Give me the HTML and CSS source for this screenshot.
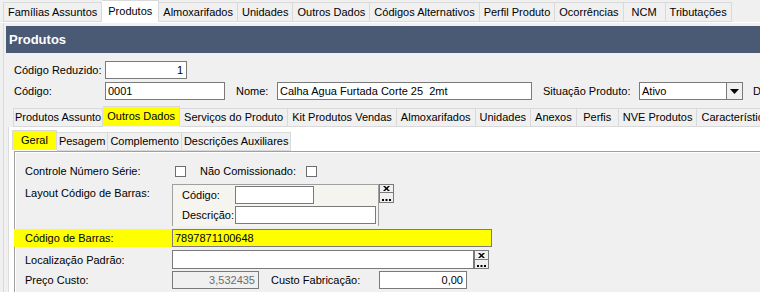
FILE: index.html
```html
<!DOCTYPE html>
<html lang="pt">
<head>
  <meta charset="UTF-8" />
  <title>Produtos</title>
  <link rel="stylesheet" href="styles.css">
</head>
<body>

<div class="tabs top-tabs">
  <div class="tab">Famílias Assuntos</div>
  <div class="tab active">Produtos</div>
  <div class="tab">Almoxarifados</div>
  <div class="tab">Unidades</div>
  <div class="tab">Outros Dados</div>
  <div class="tab">Códigos Alternativos</div>
  <div class="tab">Perfil Produto</div>
  <div class="tab">Ocorrências</div>
  <div class="tab">NCM</div>
  <div class="tab">Tributações</div>
</div>

<div class="frame">
  <div class="header">Produtos</div>

  <div class="row first">
    <label class="lbl-main">Código Reduzido:</label>
    <div class="input num w-reduz">1</div>
  </div>
  <div class="row">
    <label class="lbl-main">Código:</label>
    <div class="input w-cod">0001</div>
    <label class="lbl-nome">Nome:</label>
    <div class="input w-nome">Calha Agua Furtada Corte 25&nbsp; 2mt</div>
    <label class="lbl-sit">Situação Produto:</label>
    <div class="input select w-sit">
      <span class="select-text">Ativo</span>
      <span class="select-btn">
        <svg width="9" height="5" viewBox="0 0 9 5"><path d="M0 0h9L4.5 5z" fill="#000"/></svg>
      </span>
    </div>
    <label class="lbl-data">Data Cadastro:</label>
  </div>

  <div class="tabs sub-tabs">
    <div class="tab">Produtos Assunto</div>
    <div class="tab active yellow">Outros Dados</div>
    <div class="tab">Serviços do Produto</div>
    <div class="tab">Kit Produtos Vendas</div>
    <div class="tab">Almoxarifados</div>
    <div class="tab">Unidades</div>
    <div class="tab">Anexos</div>
    <div class="tab">Perfis</div>
    <div class="tab">NVE Produtos</div>
    <div class="tab">Características</div>
  </div>

  <div class="sheet">
    <div class="tabs inner-tabs">
      <div class="tab active yellow">Geral</div>
      <div class="tab">Pesagem</div>
      <div class="tab">Complemento</div>
      <div class="tab">Descrições Auxiliares</div>
    </div>

    <div class="group">
      <div class="grow check-row">
        <label class="lbl-g">Controle Número Série:</label>
        <span class="check"></span>
        <label class="lbl-com">Não Comissionado:</label>
        <span class="check"></span>
      </div>

      <div class="grow layout-row">
        <label class="lbl-g">Layout Código de Barras:</label>
        <div class="layout-box">
          <div class="lrow">
            <label class="lbl-l">Código:</label>
            <div class="input w-lcod"></div>
          </div>
          <div class="lrow">
            <label class="lbl-l">Descrição:</label>
            <div class="input w-ldesc"></div>
          </div>
        </div>
        <div class="btns">
          <span class="mini x">
            <svg width="7" height="5" viewBox="0 0 7 5"><path d="M0 0h2l1.5 1.5L5 0h2L4.5 2.5 7 5H5L3.5 3.5 2 5H0l2.5-2.5z" fill="#000"/></svg>
          </span>
          <span class="mini dots">
            <svg width="9" height="2" viewBox="0 0 9 2"><path d="M0 0h2v2H0zM3.5 0h2v2h-2zM7 0h2v2H7z" fill="#000"/></svg>
          </span>
        </div>
      </div>

      <div class="grow barras">
        <label class="lbl-g">Código de Barras:</label>
        <div class="input w-barras">7897871100648</div>
      </div>

      <div class="grow local-row">
        <label class="lbl-g">Localização Padrão:</label>
        <div class="input w-local"></div>
        <div class="btns">
          <span class="mini x">
            <svg width="7" height="5" viewBox="0 0 7 5"><path d="M0 0h2l1.5 1.5L5 0h2L4.5 2.5 7 5H5L3.5 3.5 2 5H0l2.5-2.5z" fill="#000"/></svg>
          </span>
          <span class="mini dots">
            <svg width="9" height="2" viewBox="0 0 9 2"><path d="M0 0h2v2H0zM3.5 0h2v2h-2zM7 0h2v2H7z" fill="#000"/></svg>
          </span>
        </div>
      </div>

      <div class="grow">
        <label class="lbl-g">Preço Custo:</label>
        <div class="input num readonly w-preco">3,532435</div>
        <label class="lbl-fab">Custo Fabricação:</label>
        <div class="input num w-fab">0,00</div>
      </div>
    </div>
  </div>
</div>

</body>
</html>
```

FILE: styles.css
```css
html, body {
  overflow: hidden;
}
body {
  margin: 0;
  width: 760px;
  height: 292px;
  background: #f0f0f0;
  font-family: 'Liberation Sans', Arial, sans-serif;
  font-size: 11px;
  color: #000;
}
label {
  flex: none;
}

/* tabs */
.tabs {
  display: flex;
  align-items: flex-start;
  white-space: nowrap;
}
.tab {
  flex: none;
  min-width: 33px;
  text-align: center;
  border: 1px solid #d9d9d9;
  border-left: none;
  background: #f0f0f0;
  padding: 0 4px;
  height: 17px;
  line-height: 17px;
}
.tab:first-child {
  border-left: 1px solid #d9d9d9;
}
.tab.active {
  background: #fff;
  height: 19px;
  line-height: 19px;
  margin-top: -2px;
  padding: 0 6px;
  border-bottom: none;
}
.tab.yellow {
  background: #ffff00;
}

.top-tabs {
  padding: 2px 0 0 3px;
  height: 20px;
  border-bottom: 1px solid #fff;
}
.top-tabs .tab {
  height: 18px;
  line-height: 18px;
}
.top-tabs .tab.active {
  height: 21px;
  line-height: 20px;
}

.frame {
  margin-left: 3px;
  border-left: 1px solid #dadada;
  padding-top: 3px;
  height: 270px;
}
.header {
  margin-left: 2px;
  height: 27px;
  line-height: 27px;
  padding-left: 3px;
  background: #4a5a74;
  color: #fff;
  font-weight: bold;
  font-size: 13px;
}

/* top fields */
.row {
  display: flex;
  align-items: center;
  white-space: nowrap;
  height: 18px;
  margin-top: 3px;
}
.row.first {
  margin-top: 8px;
}
.lbl-main {
  width: 91px;
  padding-left: 10px;
}
.input {
  box-sizing: border-box;
  height: 18px;
  line-height: 16px;
  border: 1px solid #7a7a7a;
  background: #fff;
  padding: 0 2px;
  overflow: hidden;
  white-space: nowrap;
  flex: none;
}
.input.num {
  text-align: right;
  padding-right: 3px;
}
.input.readonly {
  background: #f0f0f0;
  color: #6d6d6d;
}
.w-reduz { width: 82px; }
.w-cod { width: 120px; }
.w-nome { width: 255px; }
.w-sit { width: 104px; }
.lbl-nome {
  margin-left: 11px;
  width: 41px;
}
.lbl-sit {
  margin-left: 11px;
  width: 96px;
}
.lbl-data {
  margin-left: 10px;
}
.select {
  display: flex;
  padding: 0 0 0 2px;
}
.select-text {
  flex: 1;
}
.select-btn {
  width: 15px;
  border-left: 1px solid #7a7a7a;
  background: #f0f0f0;
  display: flex;
  align-items: center;
  justify-content: center;
}

.sub-tabs {
  margin: 6px 0 0 9px;
  padding-top: 2px;
  height: 19px;
}
.sub-tabs .tab:first-child {
  padding: 0 1px;
}
.sub-tabs .tab.active {
  padding: 0 4px;
}

.sheet {
  margin-left: 4px;
  background: #fff;
  border-left: 1px solid #dcdcdc;
  padding-top: 3px;
  height: 200px;
}
.inner-tabs {
  padding: 2px 0 0 3px;
  height: 19px;
}
.inner-tabs .tab {
  padding: 0 2px;
}
.inner-tabs .tab.active {
  min-width: 26px;
  padding: 0 8px;
}

/* group box */
.group {
  margin-left: 5px;
  border-top: 1px solid #a0a0a0;
  border-left: 1px solid #a0a0a0;
  box-shadow: inset 1px 1px 0 #fff;
  background: #f0f0f0;
  padding-top: 10px;
  height: 180px;
}
.grow {
  display: flex;
  align-items: center;
  white-space: nowrap;
  height: 18px;
  margin-bottom: 3px;
}
.lbl-g {
  width: 147px;
  padding-left: 10px;
}
.check {
  flex: none;
  width: 9px;
  height: 9px;
  border: 1px solid #6d6d6d;
  background: #fff;
  margin-left: 3px;
}
.lbl-com {
  margin-left: 14px;
  width: 103px;
}
.check-row {
  margin-bottom: 4px;
}

.layout-row {
  align-items: flex-start;
  height: 42px;
}
.layout-row .lbl-g {
  padding-top: 3px;
}
.layout-box {
  flex: none;
  width: 207px;
  height: 42px;
  box-sizing: border-box;
  border: 1px solid #a0a0a0;
  border-bottom: none;
  background: #f6f4ef;
  padding: 1px 0 0 9px;
}
.lrow {
  display: flex;
  align-items: center;
  margin-bottom: 2px;
}
.lbl-l {
  width: 53px;
}
.w-lcod { width: 79px; }
.w-ldesc { width: 141px; }

.btns {
  display: flex;
  flex-direction: column;
}
.mini {
  box-sizing: border-box;
  width: 15px;
  border: 1px solid #7a7a7a;
  background: #f0f0f0;
  display: flex;
  align-items: center;
  justify-content: center;
}
.mini.x {
  height: 9px;
}
.mini.dots {
  height: 10px;
  border-top: none;
  align-items: flex-end;
  padding-bottom: 1px;
}

.barras {
  background: #ffff00;
  margin-left: -1px;
  width: 477px;
}
.barras .lbl-g {
  padding-left: 11px;
}
.w-barras {
  width: 320px;
  background: #ffff00;
}
.local-row {
  height: 19px;
  margin-bottom: 2px;
}
.w-local {
  width: 302px;
  height: 19px;
}
.local-row .mini.x { height: 10px; }
.local-row .mini.dots { height: 9px; }
.w-preco { width: 87px; }
.lbl-fab {
  margin-left: 12px;
  width: 108px;
}
.w-fab { width: 88px; }
```
